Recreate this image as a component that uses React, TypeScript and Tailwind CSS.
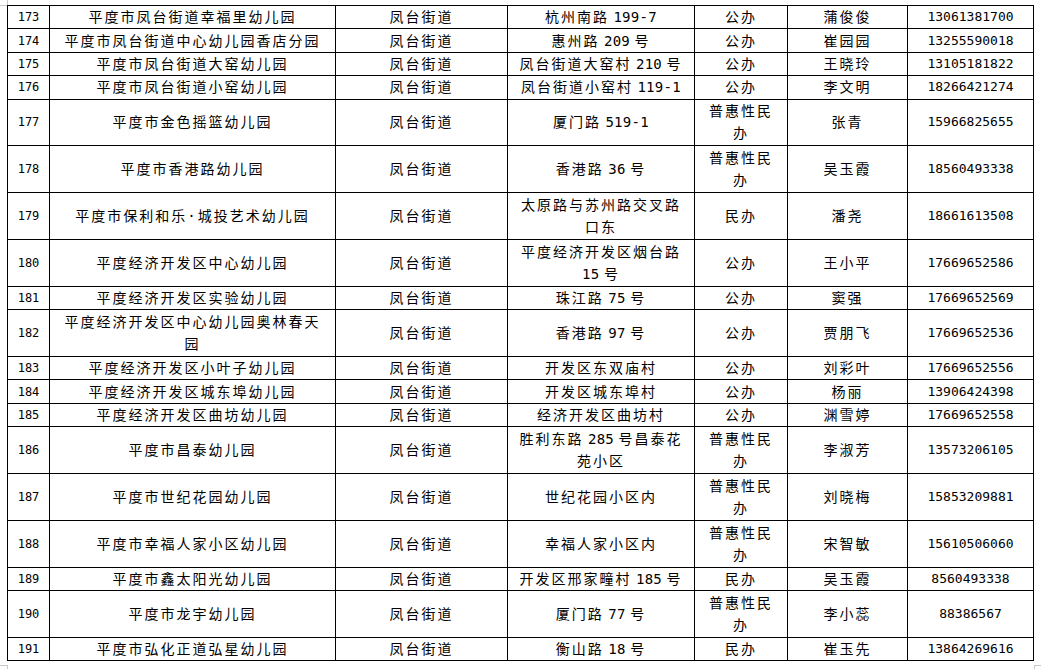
import React from 'react';

type Row = {
  no: string;
  name: string[];
  street: string;
  addr: string[];
  kind: string[];
  head: string;
  phone: string;
  tall?: boolean;
};

const rows: Row[] = [
  { no: '173', name: ['平度市凤台街道幸福里幼儿园'], street: '凤台街道', addr: ['杭州南路 199-7'], kind: ['公办'], head: '蒲俊俊', phone: '13061381700' },
  { no: '174', name: ['平度市凤台街道中心幼儿园香店分园'], street: '凤台街道', addr: ['惠州路 209 号'], kind: ['公办'], head: '崔园园', phone: '13255590018' },
  { no: '175', name: ['平度市凤台街道大窑幼儿园'], street: '凤台街道', addr: ['凤台街道大窑村 210 号'], kind: ['公办'], head: '王晓玲', phone: '13105181822' },
  { no: '176', name: ['平度市凤台街道小窑幼儿园'], street: '凤台街道', addr: ['凤台街道小窑村 119-1'], kind: ['公办'], head: '李文明', phone: '18266421274' },
  { no: '177', name: ['平度市金色摇篮幼儿园'], street: '凤台街道', addr: ['厦门路 519-1'], kind: ['普惠性民', '办'], head: '张青', phone: '15966825655', tall: true },
  { no: '178', name: ['平度市香港路幼儿园'], street: '凤台街道', addr: ['香港路 36 号'], kind: ['普惠性民', '办'], head: '吴玉霞', phone: '18560493338', tall: true },
  { no: '179', name: ['平度市保利和乐·城投艺术幼儿园'], street: '凤台街道', addr: ['太原路与苏州路交叉路', '口东'], kind: ['民办'], head: '潘尧', phone: '18661613508', tall: true },
  { no: '180', name: ['平度经济开发区中心幼儿园'], street: '凤台街道', addr: ['平度经济开发区烟台路', '15 号'], kind: ['公办'], head: '王小平', phone: '17669652586', tall: true },
  { no: '181', name: ['平度经济开发区实验幼儿园'], street: '凤台街道', addr: ['珠江路 75 号'], kind: ['公办'], head: '窦强', phone: '17669652569' },
  { no: '182', name: ['平度经济开发区中心幼儿园奥林春天', '园'], street: '凤台街道', addr: ['香港路 97 号'], kind: ['公办'], head: '贾朋飞', phone: '17669652536', tall: true },
  { no: '183', name: ['平度经济开发区小叶子幼儿园'], street: '凤台街道', addr: ['开发区东双庙村'], kind: ['公办'], head: '刘彩叶', phone: '17669652556' },
  { no: '184', name: ['平度经济开发区城东埠幼儿园'], street: '凤台街道', addr: ['开发区城东埠村'], kind: ['公办'], head: '杨丽', phone: '13906424398' },
  { no: '185', name: ['平度经济开发区曲坊幼儿园'], street: '凤台街道', addr: ['经济开发区曲坊村'], kind: ['公办'], head: '渊雪婷', phone: '17669652558' },
  { no: '186', name: ['平度市昌泰幼儿园'], street: '凤台街道', addr: ['胜利东路 285 号昌泰花', '苑小区'], kind: ['普惠性民', '办'], head: '李淑芳', phone: '13573206105', tall: true },
  { no: '187', name: ['平度市世纪花园幼儿园'], street: '凤台街道', addr: ['世纪花园小区内'], kind: ['普惠性民', '办'], head: '刘晓梅', phone: '15853209881', tall: true },
  { no: '188', name: ['平度市幸福人家小区幼儿园'], street: '凤台街道', addr: ['幸福人家小区内'], kind: ['普惠性民', '办'], head: '宋智敏', phone: '15610506060', tall: true },
  { no: '189', name: ['平度市鑫太阳光幼儿园'], street: '凤台街道', addr: ['开发区邢家疃村 185 号'], kind: ['民办'], head: '吴玉霞', phone: '8560493338' },
  { no: '190', name: ['平度市龙宇幼儿园'], street: '凤台街道', addr: ['厦门路 77 号'], kind: ['普惠性民', '办'], head: '李小蕊', phone: '88386567', tall: true },
  { no: '191', name: ['平度市弘化正道弘星幼儿园'], street: '凤台街道', addr: ['衡山路 18 号'], kind: ['民办'], head: '崔玉先', phone: '13864269616' },
];

// hanzi get the wide grid spacing, digits stay tight, spaces are narrow
function Runs({ text }: { text: string }) {
  const parts = text.match(/[\u4e00-\u9fff·]+|\s+|[^\u4e00-\u9fff·\s]+/g) || [];
  return (
    <>
      {parts.map((p, i) => {
        if (/[\u4e00-\u9fff·]/.test(p)) return <span key={i} className="tracking-[2px]">{p}</span>;
        if (/^\s+$/.test(p)) return <span key={i} className="tracking-[-4px]">{p}</span>;
        return <span key={i} className="tracking-[0.3px]">{p}</span>;
      })}
    </>
  );
}

function Lines({ lines }: { lines: string[] }) {
  return (
    <>
      {lines.map((l, i) => (
        <div key={i} className="whitespace-nowrap"><Runs text={l} /></div>
      ))}
    </>
  );
}

const cell = 'border border-black p-0 text-center align-middle leading-[22px]';
const cjk = "font-['DejaVu_Sans_Mono','Noto_Sans_CJK_SC',sans-serif] text-[14px]";

export default function App() {
  return (
    <div className="relative w-[1041px] h-[669px] bg-white overflow-hidden text-black">
      {/* page corner marks */}
      <div className="absolute left-[7px] top-0 w-px h-[5px] bg-[#c8c8c8]" />
      <div className="absolute left-0 top-[5px] w-[7px] h-px bg-[#c8c8c8]" />
      <div className="absolute left-0 top-[665px] w-[7px] h-px bg-[#c8c8c8]" />
      <div className="absolute left-[7px] top-[665px] w-px h-[4px] bg-[#c8c8c8]" />
      <div className="absolute left-[1034px] top-[665px] w-[7px] h-px bg-[#c8c8c8]" />
      <div className="absolute left-[1034px] top-[665px] w-px h-[4px] bg-[#c8c8c8]" />

      <div className="pt-[5px] pl-[7px]">
        <table className="table-fixed border-collapse w-[1027px]">
          <colgroup>
            <col className="w-[42px]" />
            <col className="w-[286px]" />
            <col className="w-[172px]" />
            <col className="w-[187px]" />
            <col className="w-[93px]" />
            <col className="w-[120px]" />
            <col className="w-[126px]" />
          </colgroup>
          <tbody>
            {rows.map((r) => (
              <tr key={r.no} className={r.tall ? 'h-[46.8px]' : 'h-[23.4px]'}>
                <td className={`${cell} font-['DejaVu_Sans_Mono',monospace] text-[12px]`}>{r.no}</td>
                <td className={`${cell} ${cjk}`}><Lines lines={r.name} /></td>
                <td className={`${cell} ${cjk}`}><Lines lines={[r.street]} /></td>
                <td className={`${cell} ${cjk}`}><Lines lines={r.addr} /></td>
                <td className={`${cell} ${cjk}`}><Lines lines={r.kind} /></td>
                <td className={`${cell} ${cjk}`}><Lines lines={[r.head]} /></td>
                <td className={`${cell} font-['DejaVu_Sans_Mono',monospace] text-[13px]`}>{r.phone}</td>
              </tr>
            ))}
          </tbody>
        </table>
      </div>
    </div>
  );
}
